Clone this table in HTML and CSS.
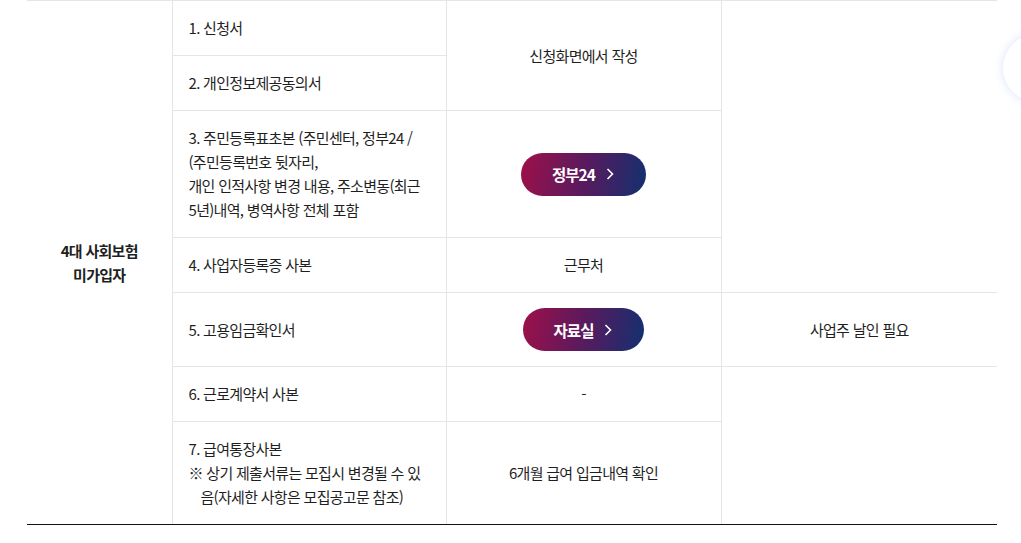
FILE: index.html
```html
<!DOCTYPE html>
<html lang="ko">
<head>
<meta charset="utf-8">
<title>제출서류</title>
<link rel="stylesheet" href="styles.css">
</head>
<body>
<div class="wrap">
  <table class="doc-table">
    <colgroup>
      <col class="c1"><col class="c2"><col class="c3"><col class="c4">
    </colgroup>
    <tbody>
      <tr>
        <th rowspan="7" class="cat bottom">4대 사회보험<br>미가입자</th>
        <td class="item">1. 신청서</td>
        <td rowspan="2" class="center">신청화면에서 작성</td>
        <td rowspan="4" class="center last"></td>
      </tr>
      <tr>
        <td class="item">2. 개인정보제공동의서</td>
      </tr>
      <tr>
        <td class="item">3. 주민등록표초본 (주민센터, 정부24 /<br>(주민등록번호 뒷자리,<br>개인 인적사항 변경 내용, 주소변동(최근<br>5년)내역, 병역사항 전체 포함</td>
        <td class="center"><a class="btn" href="#">정부24<svg class="chev" viewBox="0 0 8 12" width="8" height="12"><polyline points="1.5,1 6.5,6 1.5,11" fill="none" stroke="#fff" stroke-width="1.6"/></svg></a></td>
      </tr>
      <tr>
        <td class="item">4. 사업자등록증 사본</td>
        <td class="center">근무처</td>
      </tr>
      <tr>
        <td class="item">5. 고용임금확인서</td>
        <td class="center"><a class="btn" href="#">자료실<svg class="chev" viewBox="0 0 8 12" width="8" height="12"><polyline points="1.5,1 6.5,6 1.5,11" fill="none" stroke="#fff" stroke-width="1.6"/></svg></a></td>
        <td class="center last">사업주 날인 필요</td>
      </tr>
      <tr>
        <td class="item">6. 근로계약서 사본</td>
        <td class="center">-</td>
        <td rowspan="2" class="center last bottom"></td>
      </tr>
      <tr>
        <td class="item bottom">7. 급여통장사본<span class="note">※ 상기 제출서류는 모집시 변경될 수 있음(자세한 사항은 모집공고문 참조)</span></td>
        <td class="center bottom">6개월 급여 입금내역 확인</td>
      </tr>
    </tbody>
  </table>
</div>
<button class="float-btn" type="button" aria-label="메뉴"></button>
</body>
</html>
```

FILE: styles.css
```css
html, body {
  margin: 0;
  padding: 0;
  background: #fff;
}
body {
  font-family: "Noto Sans CJK KR", "Noto Sans", sans-serif;
  color: #1f1f1f;
  font-size: 15px;
  letter-spacing: -0.7px;
}
.wrap {
  padding: 0 24px 0 27px;
}
.doc-table {
  width: 970px;
  table-layout: fixed;
  border-collapse: collapse;
  border-top: 1px solid #e4e4ea;
}
.c1 { width: 145px; }
.c2 { width: 274px; }
.c3 { width: 275px; }
.c4 { width: 276px; }
.doc-table th,
.doc-table td {
  border: 1px solid #e4e4ea;
  padding: 15px 16px;
  line-height: 24px;
  vertical-align: middle;
  font-weight: 400;
}
.doc-table .cat {
  border-left: 0;
  font-weight: 700;
  text-align: center;
  color: #1f1f1f;
}
.doc-table .item {
  text-align: left;
  color: #1f1f1f;
}
.doc-table .center {
  text-align: center;
}
.doc-table .last {
  border-right: 0;
}
.doc-table .bottom {
  border-bottom: 1px solid #111;
}
.note {
  display: block;
  padding-left: 12px;
  text-indent: -12px;
}
.btn {
  display: inline-flex;
  align-items: center;
  gap: 11px;
  height: 43px;
  padding: 0 32px 0 31px;
  border-radius: 22px;
  background: linear-gradient(100deg, #9e1049 0%, #5a1a5e 50%, #12306f 100%);
  color: #fff;
  font-weight: 700;
  font-size: 15.5px;
  letter-spacing: -1px;
  text-decoration: none;
  vertical-align: middle;
}
.chev {
  display: block;
}
.float-btn {
  position: fixed;
  left: 1003px;
  top: 34px;
  width: 68px;
  height: 68px;
  border-radius: 50%;
  border: 0;
  background: #fff;
  box-shadow: 0 0 10px rgba(70, 110, 230, 0.2);
  padding: 0;
}
```
